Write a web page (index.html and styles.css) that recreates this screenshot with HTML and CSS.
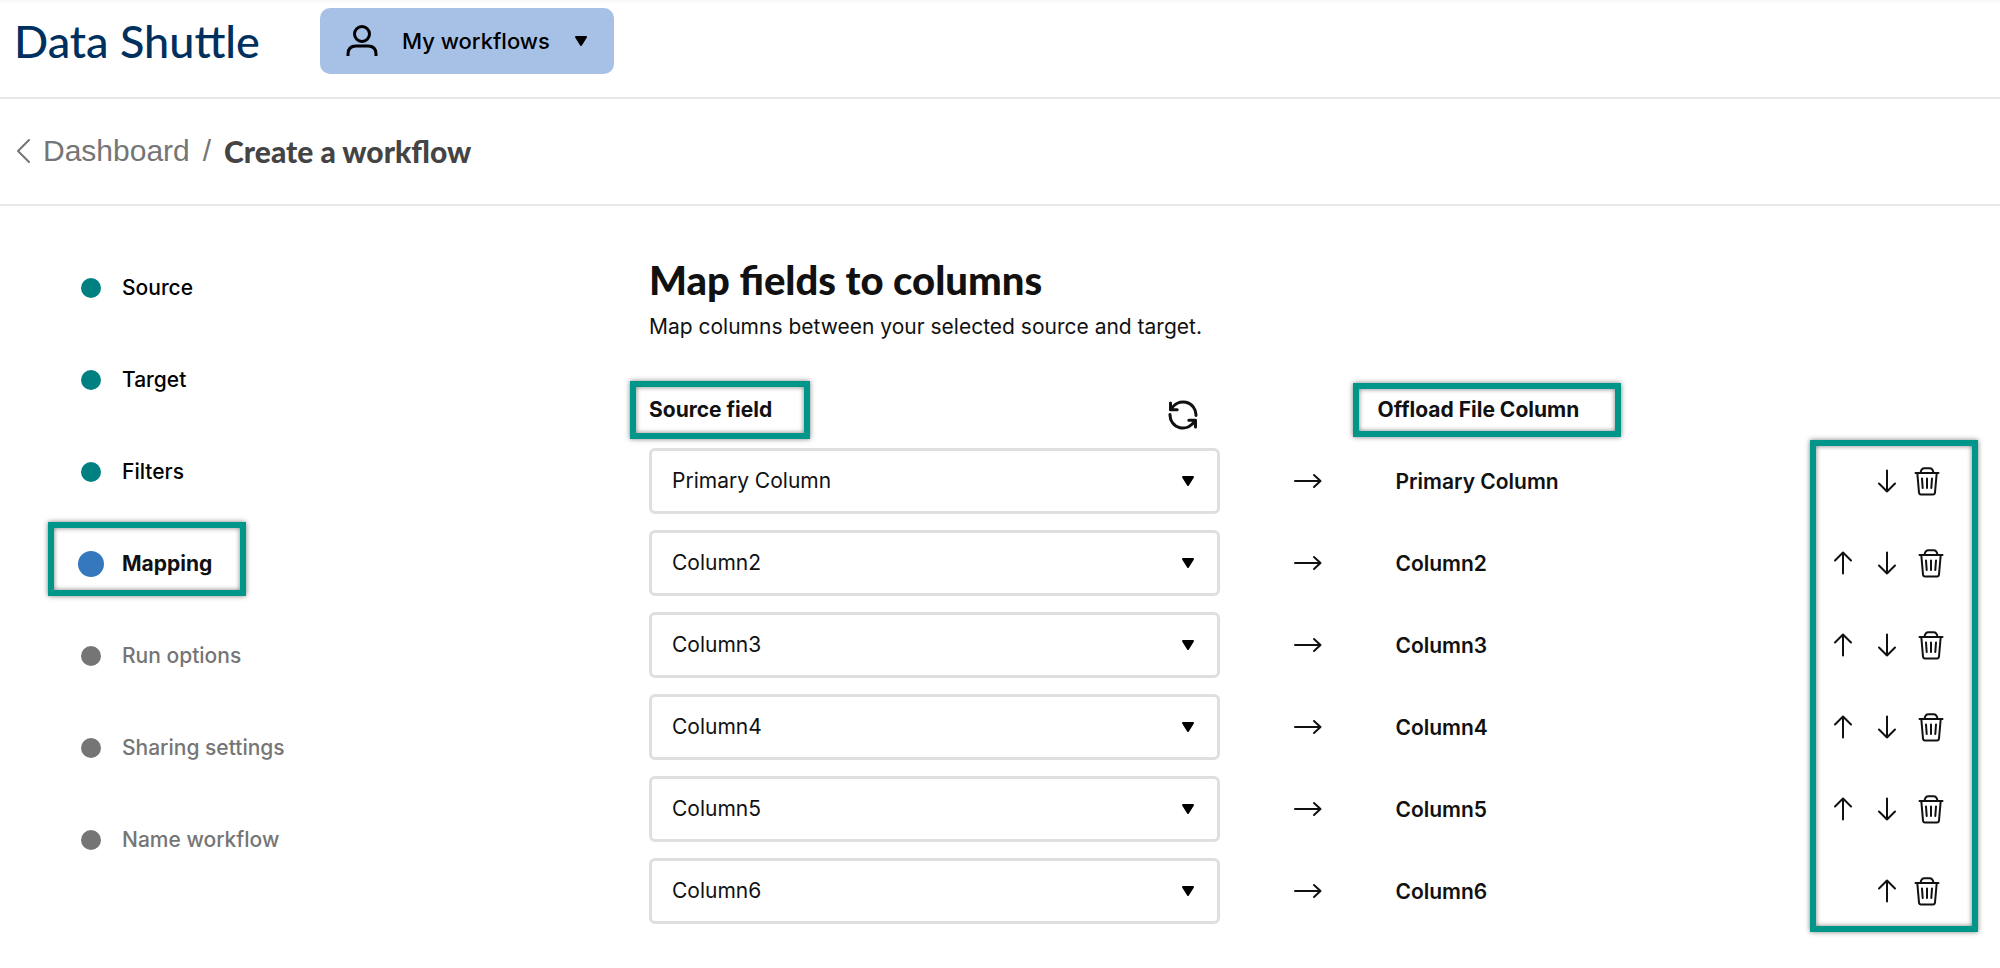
FILE: index.html
```html
<!DOCTYPE html>
<html lang="en">
<head>
<meta charset="utf-8">
<title>Data Shuttle</title>
<link rel="stylesheet" href="styles.css">
</head>
<body>
<svg class="sprite" aria-hidden="true">
  <symbol id="caret" viewBox="0 0 14 12"><path d="M2 2h10L7 10z" fill="currentColor" stroke="currentColor" stroke-width="2" stroke-linejoin="round"/></symbol>
  <symbol id="right" viewBox="0 0 28 16"><path d="M1 8h25M20 2l6.500 6-6.500 6"/></symbol>
  <symbol id="down" viewBox="0 0 20 24"><path d="M10 1.500v21M2 14.500l8 8 8-8"/></symbol>
  <symbol id="up" viewBox="0 0 20 24"><path d="M10 22.500v-21M2 9.500l8-8 8 8"/></symbol>
  <symbol id="trash" viewBox="0 0 26 30"><path d="M1.500 7h23M3.300 7l1.700 19.500q.2 2 2 2h12q1.800 0 2-2L22.700 7M6.500 7q.5-4.700 4-4.700h5q3.500 0 4 4.700M8 12.500l.7 9.500M13 12.500V22M18 12.500l-.7 9.500"/></symbol>
</svg>

<header class="topbar">
  <div class="brand">Data Shuttle</div>
  <button class="picker" type="button">
    <svg class="person" viewBox="0 0 32 34"><circle cx="16" cy="10" r="7.500"/><path d="M2 32v-2q0-8 8-8h12q8 0 8 8v2"/></svg>
    <span>My workflows</span>
    <svg class="caret"><use href="#caret"/></svg>
  </button>
</header>

<nav class="crumbs" aria-label="Breadcrumb">
  <a class="back" href="#">
    <svg class="chevron" viewBox="0 0 14 24"><path d="M13 1L2 12l11 11"/></svg>
    <span>Dashboard</span>
  </a>
  <span class="slash">/</span>
  <span class="here">Create a workflow</span>
</nav>

<div class="layout">
  <ol class="steps">
    <li class="step done"><span class="dot"></span>Source</li>
    <li class="step done"><span class="dot"></span>Target</li>
    <li class="step done"><span class="dot"></span>Filters</li>
    <li class="step current" aria-current="step"><span class="dot"></span>Mapping<span class="mark mark-step"></span></li>
    <li class="step"><span class="dot"></span>Run options</li>
    <li class="step"><span class="dot"></span>Sharing settings</li>
    <li class="step"><span class="dot"></span>Name workflow</li>
  </ol>

  <main class="content">
    <h1 class="title">Map fields to columns</h1>
    <p class="lead">Map columns between your selected source and target.</p>

    <div class="mapping">
      <table class="map">
        <thead>
          <tr>
            <th class="col-source" scope="col">
              <div class="head">
                <span class="label">Source field<span class="mark mark-source"></span></span>
                <button class="refresh" type="button" aria-label="Refresh fields">
                  <svg viewBox="0 0 30 30"><path d="M3.200 9.500A13 13 0 0 1 28 15.500M26.800 20.500A13 13 0 0 1 2 14.500"/><path d="M2.500 3v6.700h6.700M27.500 27v-6.700h-6.700"/></svg>
                </button>
              </div>
            </th>
            <th class="col-arrow"></th>
            <th class="col-target" scope="col"><span class="label offset">Offload File Column<span class="mark mark-target"></span></span></th>
            <th class="col-actions"></th>
          </tr>
        </thead>
        <tbody id="rows"></tbody>
      </table>
      <span class="mark mark-actions"></span>
    </div>
  </main>
</div>
<script src="rows.js"></script>
</body>
</html>
```
FILE: rows.js
```js
const names = ["Primary Column", "Column2", "Column3", "Column4", "Column5", "Column6"];
const last = names.length - 1;

const button = (icon, label) =>
  `<button class="act" type="button" aria-label="${label}"><svg class="${icon}"><use href="#${icon}"/></svg></button>`;

document.getElementById("rows").innerHTML = names.map((name, i) => {
  const edge = i === 0 || i === last;
  return `<tr>
    <td><div class="field">
      <select class="select" aria-label="Source field for ${name}">
        ${names.map(n => `<option${n === name ? " selected" : ""}>${n}</option>`).join("")}
      </select>
      <svg class="caret"><use href="#caret"/></svg>
    </div></td>
    <td class="to"><svg class="right"><use href="#right"/></svg></td>
    <td class="target">${name}</td>
    <td><div class="actions${edge ? " edge" : ""}">
      ${i > 0 ? button("up", "Move " + name + " up") : ""}
      ${i < last ? button("down", "Move " + name + " down") : ""}
      ${button("trash", "Remove " + name)}
    </div></td>
  </tr>`;
}).join("");
```
FILE: styles.css
```css
* { box-sizing: border-box; }

body {
  margin: 0;
  background: #fff;
  color: #111;
  font: 400 22px/32px Inter, "Liberation Sans", sans-serif;
}

svg { display: block; fill: none; stroke: currentColor; stroke-width: 2; stroke-linecap: round; stroke-linejoin: round; }
button { padding: 0; border: 0; background: none; color: inherit; font: inherit; cursor: pointer; }

.sprite { position: absolute; width: 0; height: 0; }
.caret { width: 14px; height: 12px; color: #000; }

.topbar {
  display: flex;
  align-items: center;
  gap: 60px;
  padding: 8px 14px 23px;
  border-bottom: 2px solid #e8e8e8;
  background: linear-gradient(#f8f8f8, #fff 4px);
}
.brand { color: #00305e; font: 500 45px/48px Lato, sans-serif; }
.picker {
  display: flex;
  align-items: center;
  height: 66px;
  padding: 0 26px;
  border-radius: 10px;
  background: #a7c0e5;
  color: #000;
  font-weight: 500;
}
.person { width: 32px; height: 34px; margin-right: 24px; stroke-width: 3; stroke-linecap: butt; }
.picker .caret { margin-left: 24px; }

.crumbs {
  display: flex;
  align-items: center;
  gap: 13px;
  padding: 34px 16px 35px;
  border-bottom: 2px solid #e8e8e8;
  color: #757575;
  font: 400 30px/36px "Liberation Sans", Arial, sans-serif;
}
.back { display: flex; align-items: center; gap: 13px; color: inherit; text-decoration: none; }
.chevron { width: 14px; height: 24px; }
.here { color: #444; font-family: Lato, sans-serif; font-weight: 900; }

.layout { display: grid; grid-template-columns: 649px 1fr; }

.steps { margin: 0; padding: 36px 0 0 78px; list-style: none; }
.step {
  position: relative;
  display: flex;
  align-items: center;
  gap: 18px;
  height: 92px;
  color: #757575;
  font-weight: 500;
  font-size: 21px;
}
.dot { display: grid; place-items: center; width: 26px; height: 26px; }
.dot::before { content: ""; width: 20px; height: 20px; border-radius: 50%; background: #757575; }
.done { color: #000; }
.done .dot::before { background: #008080; }
.current { color: #111; font-weight: 700; }
.current .dot::before { width: 26px; height: 26px; background: #3578bd; }

.mark {
  position: absolute;
  border: 6px solid #00968a;
  box-shadow: 0 0 5px rgba(0, 0, 0, .5), inset 0 0 5px rgba(0, 0, 0, .5);
  pointer-events: none;
}
.mark-step { left: -30px; top: 4px; width: 198px; height: 74px; }
.mark-source { left: -19px; top: -13px; width: 180px; height: 58px; }
.mark-target { left: -24px; top: -14px; width: 268px; height: 54px; }
.mark-actions { right: 0; top: 54px; width: 168px; height: 492px; }

.content { padding: 50px 22px 40px 0; }
.title { margin: 0; font: 900 40px/48px Lato, sans-serif; }
.lead { margin: 7px 0 0; font-size: 21px; }

.mapping { position: relative; margin-top: 43px; }
.map { width: 100%; border-collapse: collapse; table-layout: fixed; }
.map th, .map td { padding: 0; text-align: left; }
.map th { height: 54px; padding-top: 8px; vertical-align: top; font-weight: 700; font-size: 21px; }
.map td { height: 82px; }
.col-source { width: 43%; }
.col-arrow { width: 175px; }
.col-actions { width: 168px; }
.head { display: flex; justify-content: space-between; align-items: flex-start; padding-right: 22px; }
.label { position: relative; }
.offset { margin-left: -18px; }
.refresh { margin-top: 6px; }
.refresh svg { width: 30px; height: 30px; stroke-width: 3; }

.field { display: grid; align-items: center; }
.field > * { grid-area: 1 / 1; }
.field .caret { justify-self: end; margin-right: 25px; pointer-events: none; }
.select {
  appearance: none;
  width: 100%;
  height: 66px;
  padding: 0 20px;
  border: 3px solid #dfdfdf;
  border-radius: 6px;
  background: #fff;
  color: #111;
  font: inherit;
  font-size: 21px;
}
.right { width: 28px; height: 16px; margin: 0 auto; }
.map .target { padding-top: 2px; font-weight: 600; font-size: 21px; }

.actions { display: flex; padding-left: 11px; }
.actions.edge { padding-left: 55px; }
.act { display: grid; place-items: center; width: 44px; height: 44px; }
.edge .act:last-child { width: 36px; }
.up, .down { width: 20px; height: 24px; }
.trash { width: 26px; height: 30px; }
```
